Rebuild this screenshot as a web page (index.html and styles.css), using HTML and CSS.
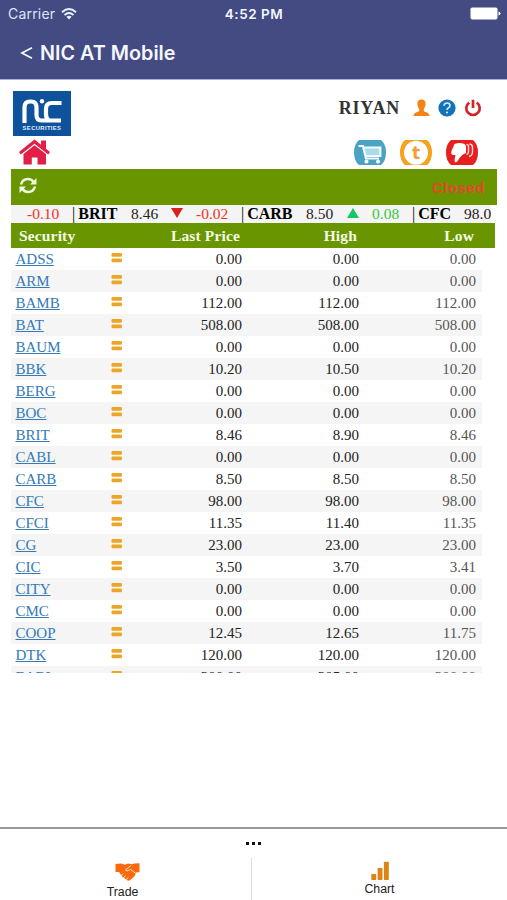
FILE: index.html
```html
<!DOCTYPE html>
<html lang="en">
<head>
<meta charset="utf-8">
<title>NIC AT Mobile</title>
<link rel="stylesheet" href="styles.css">
</head>
<body>
<svg width="0" height="0" class="defs"><symbol id="eq" viewBox="0 0 12 12"><rect x=".5" y="1" width="10.5" height="3.800" rx="1.2"/><rect x=".5" y="6.500" width="10.5" height="3.800" rx="1.2"/></symbol></svg>
<header class="top">
  <div class="status">
    <span class="carrier">Carrier
      <svg width="16" height="12" viewBox="0 0 16 12" fill="none" stroke="#e6f0ff" stroke-width="1.9"><path d="M1 4.2Q8-2 15 4.2M3.5 7Q8 3 12.5 7"/><path d="M5.4 8.7Q8 6.6 10.6 8.7L8 11.5Z" fill="#e6f0ff" stroke="none"/></svg>
    </span>
    <span class="time">4:52 PM</span>
    <span class="battery"><svg width="31" height="13" viewBox="0 0 31 13" fill="#fff"><rect x=".5" y=".5" width="27" height="12" rx="1.8"/><path d="M28.5 4.5q2 .3 2 2t-2 2z"/></svg></span>
  </div>
  <div class="title"><svg width="13" height="14" viewBox="0 0 13 14" fill="none" stroke="#f4f7ff" stroke-width="1.8"><path d="M12 1.800L2 7l10 5.200"/></svg><span>NIC AT Mobile</span></div>
</header>
<main>
  <div class="brand">
    <div class="left">
      <div class="logo">
        <svg width="42" height="26" viewBox="0 0 42 26" fill="none" stroke="#fff" stroke-width="4.200"><path d="M3.500 25V9.500Q3.500 3.500 9 3.500h1q5.500 0 5.500 6V17q0 5.500 5 5.500H40M40.500 5H31q-6 0-6 5.500v6q0 4 3 6"/><circle cx="21" cy="3.200" r="2.200" fill="#fff" stroke="none"/></svg>
        <span>SECURITIES</span>
      </div>
      <svg class="home" width="34" height="26" viewBox="0 0 34 26" fill="#e21f45"><path d="M16.500.5L1 13l1.800 2.400L16.500 4.800l13.700 10.600L32 13l-4-3.300V1.500h-5V5.700z"/><path d="M16.500 6.300L5.500 15v10.500h8.300V18.500h5.700v7h8.500V15z"/></svg>
    </div>
    <div class="right">
      <div class="user">
        <span class="name">RIYAN</span>
        <svg width="17" height="18" viewBox="0 0 17 18" fill="#f58216"><path d="M8.500.5c3 0 4.300 2 4.100 4.800-.2 2.300-1 3.500-1.800 4.500v2.200c1 1.200 5.500 1.200 5.700 5H.5c.2-3.800 4.700-3.800 5.700-5V9.800C5.400 8.800 4.600 7.600 4.400 5.300 4.200 2.500 5.500.5 8.500.5z"/></svg>
        <svg width="18" height="18" viewBox="0 0 18 18"><circle cx="9" cy="9" r="8.600" fill="#1672b8"/><path d="M6 6.800Q6.200 4 9 4t3 2.500Q12 8 10.200 9 9 9.700 9 11" fill="none" stroke="#d5eaff" stroke-width="1.700"/><circle cx="9" cy="13.500" r="1.100" fill="#d5eaff"/></svg>
        <svg width="18" height="18" viewBox="0 0 18 18" fill="none" stroke="#d0262b" stroke-width="2.700"><path d="M5.300 3.700a6.700 6.700 0 1 0 7.400 0M9 .8v8.200"/></svg>
      </div>
      <div class="actions">
        <svg width="34" height="25" viewBox="0 0 34 25"><path d="M6 0h22q5 4 5 12.500T28 25H6Q1 21 1 12.500T6 0z" fill="#4ba3c4"/><path d="M11 7h16.500v9H13z" fill="#a9dbea"/><path d="M5.500 6H10l3 12.500h13M11 7.500h16.300V16H13" fill="none" stroke="#f2fcff" stroke-width="2.200"/><circle cx="13.500" cy="21.500" r="2" fill="#fff"/><circle cx="25" cy="21.500" r="2" fill="#fff"/></svg>
        <svg width="34" height="25" viewBox="0 0 34 25"><path d="M6 0h22q5 4 5 12.500T28 25H6Q1 21 1 12.500T6 0z" fill="#f5a21f"/><circle cx="17" cy="12.700" r="12" fill="#fff"/><text x="17" y="19" text-anchor="middle" class="t">t</text></svg>
        <svg width="34" height="25" viewBox="0 0 34 25"><path d="M6 0h22q5 4 5 12.500T28 25H6Q1 21 1 12.500T6 0z" fill="#e7201f"/><path d="M9.500 4q5-2 10 0 1.500 1 1.500 3v6q-5 1.500-8 7.500-1.500 2.500-3 1.500-1-1 .5-7H8q-2.500-.5-1.500-4z" fill="#fff"/><path d="M21.500 4.500q2 0 2 2V12q0 2-2 2.500M24.500 4q3 .5 3 3v5q0 3.500-3.500 4.500" fill="none" stroke="#ffdcd8" stroke-width="1.400"/></svg>
      </div>
    </div>
  </div>
  <div class="market">
    <svg width="18" height="17" viewBox="0 0 18 17" fill="none" stroke="#eef8df" stroke-width="2.500"><path d="M2 7.500Q3.500 2 9 2q3.500 0 5.500 3M16 9.500Q14.500 15 9 15q-3.500 0-5.500-3"/><path d="M17.500 1v6.500H11zM.5 16V9.500H7z" fill="#eef8df" stroke="none"/></svg>
    <span>Closed</span>
  </div>
  <div class="ticker"><span class="i first neg">-0.10</span><span class="i a"><b><em>|</em> BRIT</b><span>8.46</span><svg width="12" height="10"><path d="M0 0h12L6 10z" fill="#d8221b"/></svg><span class="neg">-0.02</span></span><span class="i b"><b><em>|</em> CARB</b><span>8.50</span><svg width="12" height="10"><path d="M0 10h12L6 0z" fill="#13c765"/></svg><span class="pos">0.08</span></span><span class="i c"><b><em>|</em> CFC</b><span>98.00</span></span></div>
  <div class="row head"><span>Security</span><i></i><span>Last Price</span><span>High</span><span>Low</span></div>
  <div class="rows">
    <div class="row"><a>ADSS</a><svg><use href="#eq"/></svg><span>0.00</span><span>0.00</span><span>0.00</span></div>
    <div class="row"><a>ARM</a><svg><use href="#eq"/></svg><span>0.00</span><span>0.00</span><span>0.00</span></div>
    <div class="row"><a>BAMB</a><svg><use href="#eq"/></svg><span>112.00</span><span>112.00</span><span>112.00</span></div>
    <div class="row"><a>BAT</a><svg><use href="#eq"/></svg><span>508.00</span><span>508.00</span><span>508.00</span></div>
    <div class="row"><a>BAUM</a><svg><use href="#eq"/></svg><span>0.00</span><span>0.00</span><span>0.00</span></div>
    <div class="row"><a>BBK</a><svg><use href="#eq"/></svg><span>10.20</span><span>10.50</span><span>10.20</span></div>
    <div class="row"><a>BERG</a><svg><use href="#eq"/></svg><span>0.00</span><span>0.00</span><span>0.00</span></div>
    <div class="row"><a>BOC</a><svg><use href="#eq"/></svg><span>0.00</span><span>0.00</span><span>0.00</span></div>
    <div class="row"><a>BRIT</a><svg><use href="#eq"/></svg><span>8.46</span><span>8.90</span><span>8.46</span></div>
    <div class="row"><a>CABL</a><svg><use href="#eq"/></svg><span>0.00</span><span>0.00</span><span>0.00</span></div>
    <div class="row"><a>CARB</a><svg><use href="#eq"/></svg><span>8.50</span><span>8.50</span><span>8.50</span></div>
    <div class="row"><a>CFC</a><svg><use href="#eq"/></svg><span>98.00</span><span>98.00</span><span>98.00</span></div>
    <div class="row"><a>CFCI</a><svg><use href="#eq"/></svg><span>11.35</span><span>11.40</span><span>11.35</span></div>
    <div class="row"><a>CG</a><svg><use href="#eq"/></svg><span>23.00</span><span>23.00</span><span>23.00</span></div>
    <div class="row"><a>CIC</a><svg><use href="#eq"/></svg><span>3.50</span><span>3.70</span><span>3.41</span></div>
    <div class="row"><a>CITY</a><svg><use href="#eq"/></svg><span>0.00</span><span>0.00</span><span>0.00</span></div>
    <div class="row"><a>CMC</a><svg><use href="#eq"/></svg><span>0.00</span><span>0.00</span><span>0.00</span></div>
    <div class="row"><a>COOP</a><svg><use href="#eq"/></svg><span>12.45</span><span>12.65</span><span>11.75</span></div>
    <div class="row"><a>DTK</a><svg><use href="#eq"/></svg><span>120.00</span><span>120.00</span><span>120.00</span></div>
    <div class="row"><a>EABL</a><svg><use href="#eq"/></svg><span>300.00</span><span>305.00</span><span>300.00</span></div>
  </div>
</main>
<footer>
  <div class="dots"><i></i><i></i><i></i></div>
  <div class="tabs">
    <div class="tab trade">
      <svg width="25" height="20" viewBox="0 0 25 20"><path d="M.5 2L6 1.500l4 1.200 3-1.200 3.500.7 3-.7 5-.2v9h-3l-2 4-4.500 4-2 .5L7 14.500 4 10H.5z" fill="#f96a0c"/><path d="M16 3.500l-5.500 4.500 1.500 1 3.500-1.500 5.500 4M5.500 14.500l2.500-3M8 16.500l2.500-3M10.500 18.500l2.500-3" fill="none" stroke="#ffe3cc" stroke-width="1"/></svg>
      <span>Trade</span>
    </div>
    <div class="tab chart">
      <svg width="18" height="20" viewBox="0 0 18 20" fill="#dc8416"><rect x=".3" y="13" width="4.900" height="6" rx=".8"/><rect x="6.600" y="7" width="4.900" height="12" rx=".8"/><rect x="12.900" y=".8" width="4.900" height="18.200" rx=".8"/></svg>
      <span>Chart</span>
    </div>
  </div>
</footer>
</body>
</html>
```
FILE: styles.css
```css
* { box-sizing: border-box; }
body { margin: 0; width: 507px; height: 900px; overflow: hidden; display: flex; flex-direction: column; background: #fff; font-family: "Liberation Serif", serif; color: #222; }
svg { display: block; flex: none; }
.defs { position: absolute; }
.top { height: 80px; flex: none; background: #434b82; border-bottom: 1px solid #a4b4dc; font-family: Inter, sans-serif; color: #f4f7ff; }
.status { display: grid; grid-template-columns: 1fr auto 1fr; height: 27px; align-items: center; padding: 0 6px 0 8px; font-size: 13.5px; }
.carrier { display: flex; align-items: center; gap: 6px; color: #dce6fa; font-size: 14px; letter-spacing: .2px; }
.time { font-weight: 600; letter-spacing: .5px; margin-left: -1px; }
.battery { justify-self: end; }
.title { display: flex; align-items: center; gap: 7px; height: 51px; padding-left: 20px; font-size: 19.8px; font-weight: 600; }
main { flex: none; height: 593px; padding-left: 11px; }
.brand { height: 89px; display: flex; justify-content: space-between; padding: 11px 28px 0 2px; }
.logo { width: 58px; height: 45px; background: #0e529b; display: flex; flex-direction: column; align-items: center; padding-top: 7px; gap: 1px; }
.logo span { font: bold 5.8px/7px "Liberation Sans", sans-serif; color: #e1efff; letter-spacing: .4px; white-space: nowrap; }
.home { margin: 3px 0 0 5px; }
.user { display: flex; align-items: center; justify-content: flex-end; height: 34px; margin-right: -3px; gap: 8px; }
.name { font: bold 18px "Liberation Serif", serif; letter-spacing: .8px; color: #333; margin-right: 5px; }
.actions { display: flex; justify-content: flex-end; gap: 12px; margin-top: 15px; }
.t { font: bold 17px "DejaVu Sans", sans-serif; fill: #f0a030; }
.market { height: 36px; width: 486px; background: #699600; display: flex; align-items: center; justify-content: space-between; padding: 0 12px 0 8px; }
.market span { font: bold 15px "Liberation Sans", sans-serif; letter-spacing: .5px; color: #ec432b; }
.market svg { margin-top: -3px; }
.ticker { height: 18px; width: 480px; background: #f4f4f4; overflow: hidden; display: flex; white-space: nowrap; font-size: 15.5px; line-height: 18px; padding-left: 16px; }
.ticker .i { display: flex; flex: none; }
.ticker .first { width: 45px; }
.ticker svg { margin-top: 3px; }
.ticker b { color: #000; font-size: 16px; }
.ticker em { font-style: normal; font-weight: normal; margin-right: -1px; }
.a { width: 169px; }
.a b { width: 59px; }
.a b + span { width: 40px; }
.a svg { margin-right: 13px; }
.b { width: 171px; }
.b b { width: 65px; }
.b b + span { width: 41px; }
.b svg { margin-right: 13px; }
.c b { width: 52px; }
.neg { color: #f03324; }
.pos { color: #38c938; }
.row { display: grid; grid-template-columns: 95px 41px 95px 117px 117px; width: 471px; height: 22px; line-height: 23px; font-size: 15px; align-items: center; }
.row span { text-align: right; }
.row span:last-child { color: #555; }
.row a { padding-left: 4.5px; color: #337ab7; text-decoration: underline; text-decoration-thickness: 1px; }
.row svg { width: 12px; height: 12px; margin: -4px 0 0 5px; fill: #eda528; }
.row:nth-child(even) { background: #f5f5f5; }
.row.head { width: 484px; height: 25px; line-height: 25px; background: #699600; font-size: 15.5px; font-weight: bold; }
.row.head span { color: #f5fbe6; padding-right: 2px; white-space: nowrap; letter-spacing: .15px; }
.row.head span:first-child { text-align: left; padding-left: 8px; }
.rows { height: 425px; overflow: hidden; }
footer { margin-top: auto; height: 73px; border-top: 2px solid #999; font-family: "Liberation Sans", sans-serif; }
.dots { display: flex; gap: 3px; justify-content: center; padding-top: 13px; height: 29px; }
.dots i { width: 3px; height: 3px; background: #111; }
.tabs { display: grid; grid-template-columns: 252px 255px; height: 42px; }
.tab { display: flex; flex-direction: column; align-items: center; font-size: 12.3px; line-height: 15px; }
.trade { border-right: 1px solid #ddd; padding-top: 4px; gap: 3px; }
.trade svg { margin-left: 4px; }
.trade span { margin-left: -6px; }
.chart { padding-top: 3px; gap: 1px; }
```
